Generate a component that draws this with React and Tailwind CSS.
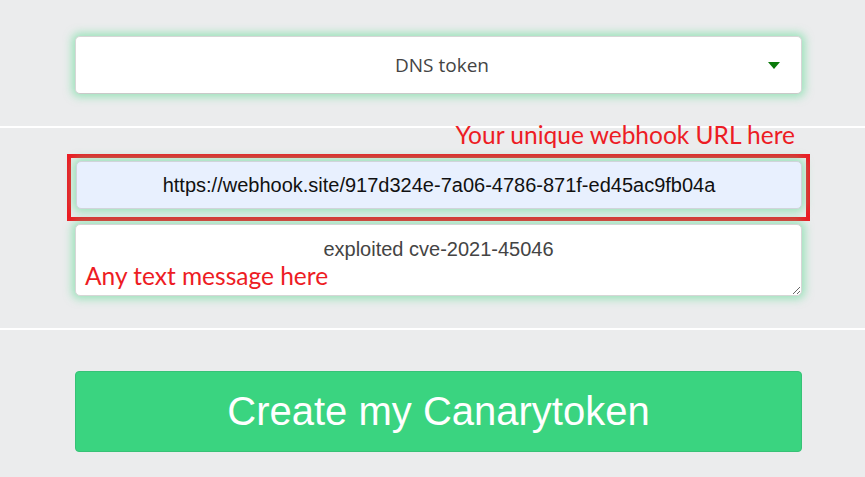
import React from 'react';

const glow = 'shadow-[0_0_8px_3px_rgba(90,220,145,0.55)]';

export default function App() {
    return (
        <div className="min-h-[477px] w-[865px] bg-[#ebeced] font-['Liberation_Sans',Arial,sans-serif]">
            <div className="pt-[36px] pl-[75px] w-[802px]">
                {/* token type select */}
                <div className={`h-[58px] bg-white rounded-[5px] border border-[#d6d6d6] border-b-[#c9c9c9] ${glow} flex items-center pl-[40px] pr-[21px]`}>
                    <span className="flex-1 text-center font-['Open_Sans',sans-serif] text-[19px] text-[#444]">DNS token</span>
                    <span className="w-0 h-0 border-l-[6.5px] border-r-[6.5px] border-t-[7px] border-l-transparent border-r-transparent border-t-[#0b7a0b]" />
                </div>
            </div>

            <div className="mt-[32px] h-[2px] bg-white" />

            <div className="pl-[75px] w-[802px] flex flex-col">
                <div className="-mt-[8px] h-[34px] text-right pr-[7px] font-['Lato',sans-serif] text-[24.5px] leading-[30px] text-[#ed1c24]">
                    Your unique webhook URL here
                </div>

                {/* annotation frame around the webhook field */}
                <div className="-ml-[8px] -mr-[8px] border-4 border-[#ed1c24] pt-[3px] pb-[8px] pl-[5px] pr-[4px]">
                    <div className={`h-[48px] bg-[#e8f0fe] rounded-[5px] border border-[#d0d4da] ${glow} flex items-center justify-center text-[20px] text-[#111]`}>
                        https://webhook.site/917d324e-7a06-4786-871f-ed45ac9fb04a
                    </div>
                </div>

                <div className="relative mt-[3px]">
                    <textarea
                        readOnly
                        value="exploited cve-2021-45046"
                        className={`block w-full h-[72px] bg-white rounded-[5px] border border-[#d6d6d6] ${glow} text-center text-[20px] leading-[24px] text-[#444] pt-[12px] outline-none`}
                    />
                    <span className="absolute left-[10px] top-[37px] font-['Lato',sans-serif] text-[24.5px] leading-[30px] text-[#ed1c24]">
                        Any text message here
                    </span>
                </div>
            </div>

            <div className="mt-[32px] h-[2px] bg-white" />

            <div className="pl-[75px] w-[802px] pt-[41px]">
                <button className="w-full h-[81px] bg-[#3ad480] border border-[#37c277] rounded-[4px] text-white text-[40px] leading-none pb-[2px]">
                    Create my Canarytoken
                </button>
            </div>
        </div>
    );
}
